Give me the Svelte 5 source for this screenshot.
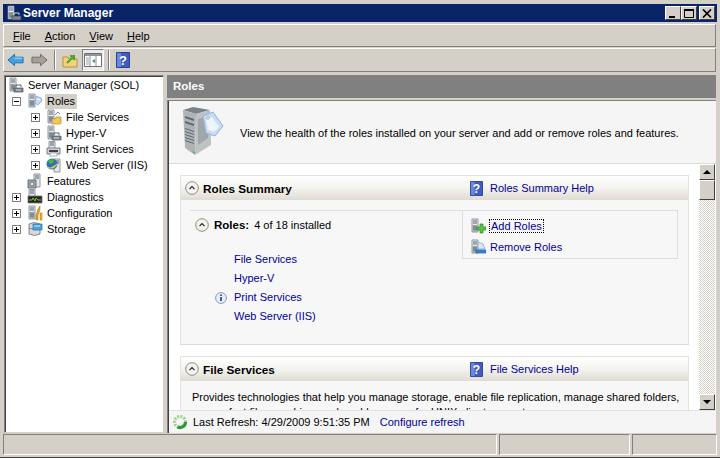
<script>
  const menus = [
    { key: 'F', rest: 'ile' },
    { key: 'A', rest: 'ction' },
    { key: 'V', rest: 'iew' },
    { key: 'H', rest: 'elp' },
  ];

  const tree = [
    { label: 'Server Manager (SOL)', depth: 0, icon: 'manager' },
    { label: 'Roles', depth: 1, icon: 'roles', toggle: 'minus', selected: true },
    { label: 'File Services', depth: 2, icon: 'file', toggle: 'plus' },
    { label: 'Hyper-V', depth: 2, icon: 'manager', toggle: 'plus' },
    { label: 'Print Services', depth: 2, icon: 'print', toggle: 'plus' },
    { label: 'Web Server (IIS)', depth: 2, icon: 'web', toggle: 'plus' },
    { label: 'Features', depth: 1, icon: 'features' },
    { label: 'Diagnostics', depth: 1, icon: 'diag', toggle: 'plus' },
    { label: 'Configuration', depth: 1, icon: 'config', toggle: 'plus' },
    { label: 'Storage', depth: 1, icon: 'storage', toggle: 'plus' },
  ];

  const roles = [
    { name: 'File Services' },
    { name: 'Hyper-V' },
    { name: 'Print Services', info: true },
    { name: 'Web Server (IIS)' },
  ];
</script>

{#snippet tower()}
  <path d="M2 1h6v13H2z" fill="#eceeef" stroke="#77808c" stroke-width="0.8" />
  <path d="M2.5 7h5v6.5h-5z" fill="#9aa2a9" />
  <path d="M3 3h4M3 5h4" stroke="#56606c" />
  <path d="M3 9h4M3 11h4" stroke="#6c747c" />
{/snippet}

{#snippet treeIcon(kind)}
  <svg class="icon16" viewBox="0 0 16 16" aria-hidden="true">
    {#if kind === 'manager'}
      {@render tower()}
      <path d="M6 11h9v4H6z" fill="#7d8791" stroke="#4a525a" stroke-width="0.7" />
      <path d="M8 10V8h5v2" fill="none" stroke="#59626b" />
      <path d="M8 13h5" stroke="#d5dade" />
    {:else if kind === 'roles'}
      {@render tower()}
      <path d="M9 3l5 2 1 3-4 4-3-2z" fill="#c3d7f2" stroke="#7d9fca" stroke-width="0.7" />
      <path d="M10 6l3 1" stroke="#fff" />
    {:else if kind === 'file'}
      {@render tower()}
      <path d="M6 10h3l1-2h5v6q0 1-1 1H6z" fill="#f3c659" stroke="#b58a2a" stroke-width="0.7" />
      <path d="M9 6l3-3 2 2" fill="none" stroke="#6c8fb4" />
    {:else if kind === 'print'}
      <path d="M3 0.5h6v8H3z" fill="#e8e8e8" stroke="#77808c" stroke-width="0.8" />
      <path d="M4 2h4M4 4h4" stroke="#56606c" />
      <path d="M1 7h13v6H1z" fill="#cfd2d6" stroke="#60676e" stroke-width="0.8" />
      <path d="M3 9h9v2H3z" fill="#3a4148" />
      <path d="M4 12h7v3H4z" fill="#fff" stroke="#7b8288" stroke-width="0.6" />
    {:else if kind === 'web'}
      <path d="M8 2h6v13H8z" fill="#e8e8e8" stroke="#77808c" stroke-width="0.8" />
      <path d="M9 4h4M9 6h4" stroke="#56606c" />
      <circle cx="6" cy="7" r="5.5" fill="#2f6fc4" />
      <path d="M2 4q3-3 6-1l-1 3-3 1zM6 9l4-1-1 3-3 1z" fill="#4fb33f" />
      <path d="M1 10q5 3 10-3" fill="none" stroke="#f1cb3d" stroke-width="1.2" />
    {:else if kind === 'features'}
      <path d="M7 1h6v13H7z" fill="#e8e8e8" stroke="#77808c" stroke-width="0.8" />
      <path d="M8 3h4M8 5h4" stroke="#56606c" />
      <path d="M1 7h8v8H1z" fill="#a4abb1" stroke="#4f565c" stroke-width="0.8" />
      <circle cx="5" cy="11" r="2" fill="#eef0f2" stroke="#3e454b" stroke-width="0.7" />
    {:else if kind === 'diag'}
      <path d="M2 0.5h6v7H2z" fill="#e8e8e8" stroke="#77808c" stroke-width="0.8" />
      <path d="M3 2h4M3 4h4" stroke="#56606c" />
      <path d="M1 7h14v7H1z" fill="#26281f" stroke="#70757a" stroke-width="0.8" />
      <path d="M2 11h3l1-2 2 3 1-3 2 2h3" fill="none" stroke="#8ccf3e" stroke-width="0.9" />
    {:else if kind === 'config'}
      {@render tower()}
      <path d="M11 4l2-3v4l-2 5v5h-2v-5z" fill="#e7a71d" stroke="#a06f0a" stroke-width="0.5" />
      <path d="M13 8h2v7h-2z" fill="#f0b52c" stroke="#a06f0a" stroke-width="0.5" />
    {:else}
      <path d="M2 3q5-3 11 0v10q-5 3-11 0z" fill="#d5d9dd" stroke="#6b7279" stroke-width="0.8" />
      <path d="M2 7q5 3 11 0" fill="none" stroke="#6b7279" stroke-width="0.8" />
      <path d="M6 3h9v6H6z" fill="#4ba3dc" stroke="#2c6d9f" stroke-width="0.7" />
      <path d="M7 5h6" stroke="#cfeaf9" />
    {/if}
  </svg>
{/snippet}

{#snippet help(size)}
  <svg class="help" width={size} height={size + 2} viewBox="0 0 14 16" aria-hidden="true">
    <path d="M0.5 0.5h13v15H0.5z" fill="#3f5cc0" stroke="#2a3f93" />
    <path d="M1 1h4v14H1z" fill="#6c86dc" />
    <text x="7" y="12.5" class="help-q">?</text>
  </svg>
{/snippet}

{#snippet collapse()}
  <svg class="collapse" width="14" height="14" viewBox="0 0 14 14" aria-hidden="true">
    <circle cx="7" cy="7" r="6.3" fill="#f4f3ee" stroke="#8c8c86" />
    <path d="M4.5 8.2L7 5.6l2.5 2.6" fill="none" stroke="#222" stroke-width="1.2" />
  </svg>
{/snippet}

<div class="window">
  <header class="titlebar">
    <svg class="icon16" viewBox="0 0 16 16" aria-hidden="true">
      {@render tower()}
      <path d="M6 11h9v4H6z" fill="#7d8791" stroke="#39414a" stroke-width="0.7" />
      <path d="M8 10V8h5v2" fill="none" stroke="#cfd5db" />
    </svg>
    <span class="title-text">Server Manager</span>
    <div class="caption-buttons">
      <button class="caption" aria-label="Minimize">
        <svg width="10" height="9" viewBox="0 0 10 9"><path d="M1 7h6v2H1z" fill="#000" /></svg>
      </button>
      <button class="caption" aria-label="Maximize">
        <svg width="10" height="9" viewBox="0 0 10 9"><path d="M0.5 1.5h9v7h-9z" fill="none" stroke="#000" /><path d="M0 1h10" stroke="#000" stroke-width="2" /></svg>
      </button>
      <button class="caption close" aria-label="Close">
        <svg width="10" height="9" viewBox="0 0 10 9"><path d="M1 0.5l8 8M9 0.5l-8 8" stroke="#000" stroke-width="1.7" /></svg>
      </button>
    </div>
  </header>

  <nav class="menubar">
    {#each menus as m}
      <span class="menu-item"><u>{m.key}</u>{m.rest}</span>
    {/each}
  </nav>

  <div class="toolbar">
    <svg class="tool back" width="17" height="16" viewBox="0 0 18 16" aria-hidden="true">
      <path d="M1 8l7-6v3h9v6H8v3z" fill="#3fa3ea" stroke="#1f6fb3" />
      <path d="M8 6h8" stroke="#bfe3fb" />
    </svg>
    <svg class="tool forward" width="17" height="16" viewBox="0 0 18 16" aria-hidden="true">
      <path d="M17 8l-7-6v3H1v6h9v3z" fill="#a2a29a" stroke="#6a6a64" />
    </svg>
    <span class="tool-sep"></span>
    <svg class="tool up" width="16" height="16" viewBox="0 0 16 16" aria-hidden="true">
      <path d="M1 5h5l1 2h8v8H1z" fill="#f1d27c" stroke="#b4933e" />
      <path d="M5 11l6-6M8 4h4v4" fill="none" stroke="#4da52e" stroke-width="2" />
    </svg>
    <span class="tool-active">
      <svg width="18" height="16" viewBox="0 0 18 16" aria-hidden="true">
        <path d="M0.5 1.5h17v13H0.5z" fill="#fff" stroke="#6c7278" />
        <path d="M1 2h16v2H1z" fill="#8d949a" />
        <path d="M6 4v10M12 4v10" stroke="#8d949a" />
        <path d="M2 6h3M2 8h3M2 10h3M2 12h3" stroke="#9aa2a8" />
        <path d="M11 7l-3 2 3 2z" fill="#4f8b65" />
      </svg>
    </span>
    <span class="tool-sep"></span>
    {@render help(14)}
  </div>

  <div class="body">
    <aside class="tree">
      {#each tree as node}
        <div class="tree-row depth{node.depth}">
          <span class="toggle-slot">
            {#if node.toggle}
              <span class="toggle">
                <span class="h"></span>
                {#if node.toggle === 'plus'}<span class="v"></span>{/if}
              </span>
            {/if}
          </span>
          {@render treeIcon(node.icon)}
          <span class="tree-label" class:selected={node.selected}>{node.label}</span>
        </div>
      {/each}
    </aside>

    <main class="main">
      <div class="main-header">Roles</div>
      <div class="main-inner">
        <div class="intro">
          <svg class="hero" width="46" height="50" viewBox="0 0 46 50" aria-hidden="true">
            <path d="M0 3l10-3 17 3-14 4z" fill="#7a828a" />
            <path d="M0 3l13 4-1 41-10-7z" fill="#aeb3b7" />
            <path d="M13 7l14-4 1 35-16 10z" fill="#bfc2c3" />
            <path d="M2 9l9 3v2L2 11zM2 14l9 3v2L2 16zM2 21l9 3v1L2 22zM2 24l9 3v1L2 25zM2 27l9 3v1L2 28zM2 30l9 3v1L2 31zM2 33l9 3v1L2 34z" fill="#5f676e" />
            <path d="M15 12l10-3v22l-10 7z" fill="#a0a6aa" />
            <path d="M10 44.500l2 1.500" stroke="#58b04a" stroke-width="1.500" />
            <path d="M20 9l10-4 10 14-8 10-9-3z" fill="#c9dcf4" stroke="#93b2d8" stroke-linejoin="round" />
            <path d="M23 13l6-3 7 10-5 5-6-2z" fill="#eef4fb" />
            <circle cx="25" cy="11" r="1.300" fill="#fff" stroke="#7f9ec6" stroke-width="0.7" />
          </svg>
          <p>View the health of the roles installed on your server and add or remove roles and features.</p>
        </div>

        <div class="scroller">
          <div class="scroll-content">
            <section class="panel">
              <div class="panel-head">
                {@render collapse()}
                <h2>Roles Summary</h2>
                <span class="head-help">
                  {@render help(13)}
                  <a href="#help">Roles Summary Help</a>
                </span>
              </div>
              <div class="panel-body summary">
                <div class="summary-left">
                  <div class="count-row">
                    {@render collapse()}
                    <strong>Roles:</strong>
                    <span>4 of 18 installed</span>
                  </div>
                  <ul class="role-list">
                    {#each roles as role}
                      <li>
                        {#if role.info}
                          <svg class="info" width="12" height="12" viewBox="0 0 12 12" aria-hidden="true">
                            <circle cx="6" cy="6" r="5.4" fill="#e9eef8" stroke="#8a97b8" />
                            <path d="M5 5h2v4H5z" fill="#3a5fa8" />
                            <path d="M5 2.5h2v1.5H5z" fill="#3a5fa8" />
                          </svg>
                        {/if}
                        <a href="#role">{role.name}</a>
                      </li>
                    {/each}
                  </ul>
                </div>
                <div class="actions">
                  <div class="action">
                    <svg class="icon16" viewBox="0 0 16 16" aria-hidden="true">
                      {@render tower()}
                      <path d="M10 6h3v3h3v3h-3v3h-3v-3H7V9h3z" fill="#5cc04a" stroke="#2e8a25" stroke-width="0.7" />
                    </svg>
                    <a href="#add" class="focused">Add Roles</a>
                  </div>
                  <div class="action">
                    <svg class="icon16" viewBox="0 0 16 16" aria-hidden="true">
                      {@render tower()}
                      <path d="M8 3l5 2 2 5H8z" fill="#d8e6f6" stroke="#7d9fca" stroke-width="0.7" />
                      <path d="M6 11h10v3H6z" fill="#3a86d4" stroke="#1f5c9e" stroke-width="0.7" />
                    </svg>
                    <a href="#remove">Remove Roles</a>
                  </div>
                </div>
              </div>
            </section>

            <section class="panel">
              <div class="panel-head">
                {@render collapse()}
                <h2>File Services</h2>
                <span class="head-help">
                  {@render help(13)}
                  <a href="#help">File Services Help</a>
                </span>
              </div>
              <div class="panel-body desc">
                Provides technologies that help you manage storage, enable file replication, manage shared folders,
                ensure fast file searching, and enable access for UNIX client computers.
              </div>
            </section>
          </div>

          <div class="scrollbar">
            <button class="sb-btn" aria-label="Scroll up"><span class="arrow up-arrow"></span></button>
            <div class="sb-thumb"></div>
            <div class="sb-track"></div>
            <button class="sb-btn" aria-label="Scroll down"><span class="arrow down-arrow"></span></button>
          </div>
        </div>

        <footer class="refresh">
          <svg class="refresh-icon" width="16" height="16" viewBox="0 0 16 16" aria-hidden="true">
            <circle cx="8" cy="8" r="5.5" fill="none" stroke="#9ad28c" stroke-width="3" stroke-dasharray="2 1.2" />
            <path d="M13.5 8a5.5 5.5 0 0 1-8 4.9" fill="none" stroke="#2a9a36" stroke-width="3.2" />
          </svg>
          <span>Last Refresh: 4/29/2009 9:51:35 PM</span>
          <a href="#refresh">Configure refresh</a>
        </footer>
      </div>
    </main>
  </div>

  <div class="statusbar">
    <span class="status-cell first"></span>
    <span class="status-cell second"></span>
    <span class="status-cell third"></span>
  </div>
</div>

<style>
  :global(body) {
    margin: 0;
    background: #d4d0c8;
  }

  .window {
    width: 720px;
    height: 458px;
    box-sizing: border-box;
    padding: 4px 3px 2px 3px;
    background: #d4d0c8;
    border-top: 1px solid #d4d0c8;
    border-bottom: 1px solid #404040;
    display: flex;
    flex-direction: column;
    overflow: hidden;
    font-family: "Liberation Sans", Arial, sans-serif;
    font-size: 11px;
    color: #000;
  }

  .titlebar {
    height: 18px;
    flex: none;
    margin-top: -1px;
    padding-left: 3px;
    display: flex;
    align-items: center;
    gap: 1px;
    background: #0a246a;
  }

  .title-text {
    color: #fff;
    font-weight: 700;
    font-size: 12px;
  }

  .caption-buttons {
    margin-left: auto;
    margin-right: 2px;
    display: flex;
  }

  .caption {
    width: 16px;
    height: 14px;
    padding: 0;
    background: #d4d0c8;
    border: 1px solid;
    border-color: #fff #404040 #404040 #fff;
    display: flex;
    align-items: center;
    justify-content: center;
  }

  .caption.close {
    margin-left: 2px;
  }

  .menubar {
    height: 23px;
    flex: none;
    margin: 2px 1px 0 0;
    padding-left: 9px;
    display: flex;
    align-items: center;
    gap: 14px;
    border: 1px solid;
    border-color: #fff #808080 #808080 #fff;
    box-sizing: border-box;
  }

  .toolbar {
    height: 24px;
    flex: none;
    margin: 1px 1px 0 0;
    padding-left: 3px;
    display: flex;
    align-items: center;
    border: 1px solid;
    border-color: #fff #808080 #808080 #fff;
    box-sizing: border-box;
  }

  .tool.forward {
    margin-left: 7px;
  }

  .tool-sep {
    width: 0;
    height: 20px;
    margin: 0 6px;
    border-left: 1px solid #808080;
    border-right: 1px solid #fff;
  }

  .tool.up {
    margin-left: 0;
  }

  .tool-active {
    width: 22px;
    height: 22px;
    margin-left: 4px;
    margin-right: -2px;
    box-sizing: border-box;
    display: flex;
    align-items: center;
    justify-content: center;
    border: 1px solid;
    border-color: #808080 #fff #fff #808080;
    background: #ecebe6;
  }

  .help {
    display: block;
    flex: none;
  }

  .help-q {
    font: 700 13px "Liberation Sans", sans-serif;
    fill: #fff;
    text-anchor: middle;
  }

  .body {
    flex: 1;
    min-height: 0;
    margin-top: 3px;
    display: flex;
  }

  .tree {
    width: 160px;
    flex: none;
    box-sizing: border-box;
    padding-top: 1px;
    background: #fff;
    border: 1px solid;
    border-color: #808080 #d4d0c8 #d4d0c8 #808080;
    box-shadow: inset 1px 1px 0 #404040;
    margin-left: 1px;
  }

  .tree-row {
    height: 16px;
    display: flex;
    align-items: center;
    white-space: nowrap;
  }

  .toggle-slot {
    width: 9px;
    height: 9px;
    flex: none;
    margin-right: 6px;
  }

  .depth0 {
    padding-left: 3px;
  }

  .depth0 .toggle-slot {
    display: none;
  }

  .depth1 {
    padding-left: 7px;
  }

  .depth2 {
    padding-left: 26px;
  }

  .toggle {
    position: relative;
    display: block;
    width: 9px;
    height: 9px;
    box-sizing: border-box;
    border: 1px solid #808080;
    background: #fff;
  }

  .toggle .h {
    position: absolute;
    left: 1px;
    top: 3px;
    width: 5px;
    height: 1px;
    background: #000;
  }

  .toggle .v {
    position: absolute;
    left: 3px;
    top: 1px;
    width: 1px;
    height: 5px;
    background: #000;
  }

  .icon16 {
    display: block;
    width: 16px;
    height: 16px;
    flex: none;
  }

  .tree-label {
    margin-left: 2px;
    padding: 1px 2px;
    line-height: 13px;
  }

  .tree-label.selected {
    background: #d4d0c8;
  }

  .main {
    flex: 1;
    min-width: 0;
    margin: 0 1px 0 3px;
    display: flex;
    flex-direction: column;
  }

  .main-header {
    height: 23px;
    flex: none;
    box-sizing: border-box;
    padding-left: 6px;
    line-height: 23px;
    background: #808080;
    color: #fff;
    font-weight: 700;
    font-size: 11.5px;
  }

  .main-inner {
    flex: 1;
    min-height: 0;
    margin-top: 2px;
    display: flex;
    flex-direction: column;
    border-left: 1px solid #808080;
    border-top: 1px solid #808080;
    box-shadow: inset 1px 1px 0 #404040;
    background: #fff;
  }

  .intro {
    height: 63px;
    flex: none;
    box-sizing: border-box;
    padding: 0 0 0 14px;
    margin-left: 1px;
    display: flex;
    align-items: center;
    gap: 11px;
    background: #f5f5f5;
    border-bottom: 1px solid #dcdcdc;
  }

  .intro p {
    margin: 1px 0 0;
    white-space: nowrap;
  }

  .scroller {
    flex: 1;
    min-height: 0;
    display: flex;
    overflow: hidden;
  }

  .scroll-content {
    flex: 1;
    min-width: 0;
    overflow: hidden;
    padding: 11px 10px 0 12px;
  }

  .panel {
    margin-bottom: 11px;
    border: 1px solid #e4e3dd;
    border-bottom-color: #dcdcd6;
  }

  .panel-head {
    height: 24px;
    display: flex;
    align-items: center;
    padding-left: 4px;
    background: linear-gradient(#ffffff, #f4f3ee 50%, #dedcd3);
  }

  .panel-head h2 {
    width: 267px;
    flex: none;
    margin: 0 0 0 4px;
    font-size: 11.75px;
    font-weight: 700;
  }

  .head-help {
    display: flex;
    align-items: center;
    gap: 7px;
  }

  a {
    color: #00009c;
    text-decoration: none;
  }

  .panel-body {
    background: #f7f7f7;
  }

  .summary {
    height: 144px;
    box-sizing: border-box;
    padding: 10px 10px 0 9px;
    display: flex;
  }

  .summary-left {
    width: 272px;
    flex: none;
    border-top: 1px solid #e0e0e0;
    padding-top: 6px;
  }

  .count-row {
    display: flex;
    align-items: center;
    padding-left: 5px;
    height: 16px;
  }

  .count-row strong {
    margin-left: 5px;
    font-size: 11.5px;
    font-weight: 700;
  }

  .count-row span {
    margin-left: 5px;
  }

  .role-list {
    list-style: none;
    margin: 17px 0 0;
    padding: 0 0 0 44px;
  }

  .role-list li {
    height: 19px;
    line-height: 19px;
    position: relative;
  }

  .info {
    position: absolute;
    left: -19px;
    top: 4px;
  }

  .actions {
    width: 216px;
    height: 49px;
    box-sizing: border-box;
    padding-top: 4px;
    border: 1px solid #dedede;
  }

  .action {
    height: 21px;
    display: flex;
    align-items: center;
    gap: 4px;
    padding-left: 7px;
  }

  .focused {
    outline: 1px dotted #000;
    padding: 0 1px;
  }

  .desc {
    padding: 9px 3px 20px 11px;
    line-height: 15px;
  }

  .scrollbar {
    width: 16px;
    flex: none;
    margin-right: 1px;
    display: flex;
    flex-direction: column;
    background: repeating-conic-gradient(#d4d0c8 0 25%, #fff 0 50%) 0 0 / 2px 2px;
  }

  .sb-btn, .sb-thumb {
    flex: none;
    box-sizing: border-box;
    background: #d4d0c8;
    border: 1px solid;
    border-color: #fff #404040 #404040 #fff;
  }

  .sb-btn {
    width: 16px;
    height: 16px;
    padding: 0;
    display: flex;
    align-items: center;
    justify-content: center;
  }

  .sb-thumb {
    height: 20px;
  }

  .sb-track {
    flex: 1;
  }

  .arrow {
    width: 0;
    height: 0;
    border-left: 4px solid transparent;
    border-right: 4px solid transparent;
  }

  .up-arrow {
    border-bottom: 4px solid #000;
  }

  .down-arrow {
    border-top: 4px solid #000;
  }

  .refresh {
    height: 23px;
    flex: none;
    box-sizing: border-box;
    margin-left: 1px;
    padding-left: 3px;
    display: flex;
    align-items: center;
    background: #f5f5f5;
    border-top: 1px solid #e2e2e2;
  }

  .refresh span {
    margin-left: 5px;
  }

  .refresh a {
    margin-left: 10px;
  }

  .statusbar {
    height: 21px;
    flex: none;
    margin-top: 1px;
    display: flex;
    gap: 2px;
  }

  .status-cell {
    display: block;
    box-sizing: border-box;
    height: 100%;
    border: 1px solid;
    border-color: #808080 #fff #fff #808080;
  }

  .status-cell.first {
    width: 494px;
  }

  .status-cell.second {
    width: 131px;
  }

  .status-cell.third {
    flex: 1;
  }
</style>
